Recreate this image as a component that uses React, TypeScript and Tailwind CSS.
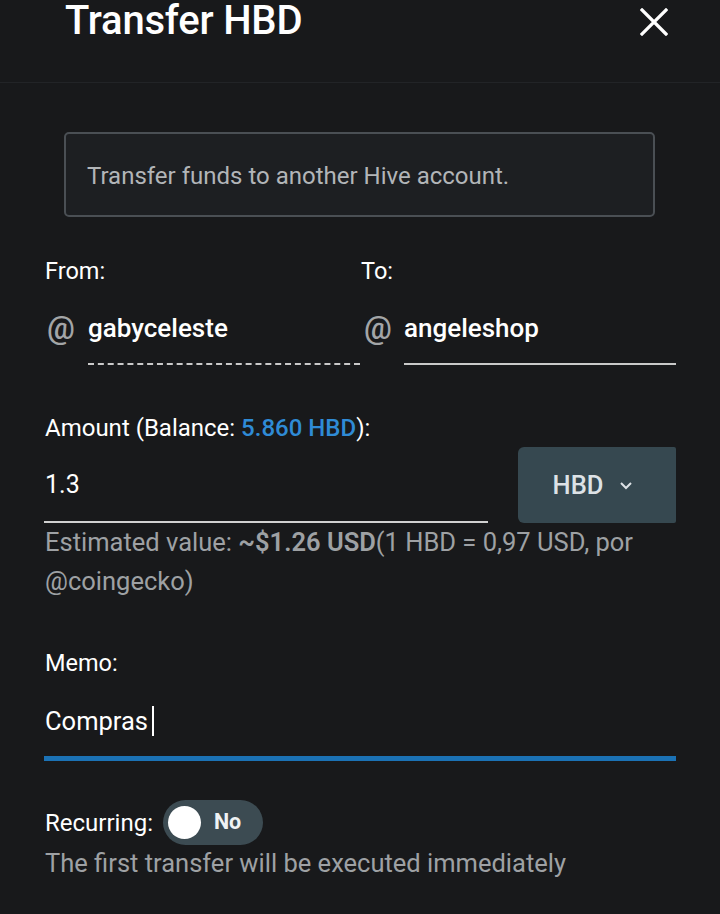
import React from "react";

function AtIcon() {
  return (
    <span className="text-[31px] leading-none text-[#a3a5a7] font-medium w-[28px] flex justify-center">@</span>
  );
}

export default function App() {
  return (
    <div className="w-[720px] h-[914px] bg-[#18191b] text-white overflow-hidden" style={{ fontFamily: "Roboto, 'Liberation Sans', sans-serif" }}>
      <div className="h-[83px] border-b border-[#222427] flex items-start justify-between pl-[65px] pr-[52px]">
        <h1 className="text-[40px] leading-[44px] -mt-[1px] font-medium tracking-[-0.2px]">Transfer HBD</h1>
        <svg width="28" height="28" viewBox="0 0 28 28" className="mt-[8px]">
          <path d="M2 2 L26 26 M26 2 L2 26" stroke="white" strokeWidth="3.2" strokeLinecap="square" />
        </svg>
      </div>

      <div className="px-[44px]">
        <div className="mt-[49px] ml-[20px] mr-[21px] h-[85px] rounded-[5px] border-2 border-[#4a4f54] bg-[#1d1f22] flex items-center px-[21px] pt-[3px]">
          <span className="text-[24px] text-[#b2b5b8]">Transfer funds to another Hive account.</span>
        </div>

        <div className="mt-[40px] flex">
          <div className="w-[316px]">
            <div className="text-[23.5px] leading-[28px] pl-[1px]">From:</div>
            <div className="mt-[27px] flex items-center gap-[13px] pl-[3px] h-[32px]">
              <AtIcon />
              <span className="text-[26px] font-medium">gabyceleste</span>
            </div>
            <div className="ml-[44px] mt-[19px] border-b-2 border-dashed border-[#c9c9c9] w-[272px]" />
          </div>
          <div className="flex-1">
            <div className="text-[23.5px] leading-[28px] pl-[1px]">To:</div>
            <div className="mt-[27px] flex items-center gap-[12px] pl-[4px] h-[32px]">
              <AtIcon />
              <span className="text-[26px] font-medium">angeleshop</span>
            </div>
            <div className="mt-[19px] ml-[44px] border-b-2 border-[#c9c9c9]" />
          </div>
        </div>

        <div className="mt-[49px] text-[24px] leading-[28px] pl-[1px]">
          Amount (Balance: <span className="text-[#2f8bd6] font-medium">5.860 HBD</span>):
        </div>

        <div className="mt-[5px] flex items-start">
          <div className="w-[444px] h-[76px] border-b-2 border-[#d0d0d0] flex items-center">
            <span className="text-[25px] pl-[1px] mt-[1px]">1.3</span>
          </div>
          <div className="ml-[30px] w-[158px] h-[76px] bg-[#364850] rounded-l-[6px] rounded-r-[2px] flex items-center justify-center gap-[16px] pr-[8px]">
            <span className="text-[25.5px] font-medium text-[#dde2e6]">HBD</span>
            <svg width="14" height="10" viewBox="0 0 14 10">
              <path d="M2 3 L7 8 L12 3" stroke="#dde2e6" strokeWidth="2" fill="none" />
            </svg>
          </div>
        </div>

        <p className="text-[25.5px] leading-[39px] text-[#9ea1a4] pl-[1px]">
          Estimated value: <b className="font-semibold">~$1.26 USD</b>(1 HBD = 0,97 USD, por @coingecko)
        </p>

        <div className="mt-[48px] text-[23.5px] leading-[28px] pl-[1px]">Memo:</div>

        <div className="mt-[16px] h-[68px] border-b-[5px] border-[#1b72b5] flex items-start pt-[13px]">
          <span className="text-[25.5px] leading-[30px] pl-[1px]">Compras</span>
          <span className="ml-[4px] w-[2px] h-[30px] bg-white" />
        </div>

        <div className="mt-[39px] flex items-center h-[45px]">
          <span className="text-[24px] pl-[1px]">Recurring:</span>
          <div className="ml-[10px] w-[100px] h-[45px] rounded-full bg-[#3c4b52] flex items-center pl-[5px]">
            <div className="w-[33px] h-[33px] rounded-full bg-white" />
            <span className="ml-[13px] text-[21.5px] font-bold text-[#eef2f4]">No</span>
          </div>
        </div>
        <div className="text-[25.5px] leading-[30px] text-[#9ea1a4] pl-[1px] mt-[3px]">The first transfer will be executed immediately</div>
      </div>
    </div>
  );
}
